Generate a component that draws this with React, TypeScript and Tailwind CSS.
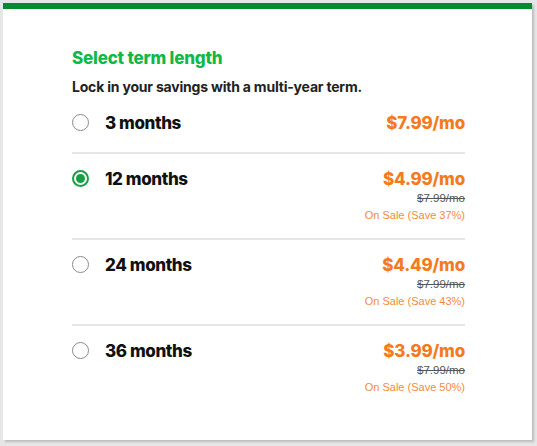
import React from "react";

type Term = {
  label: string;
  price: string;
  original?: string;
  sale?: string;
  selected?: boolean;
};

const terms: Term[] = [
  { label: "3 months", price: "$7.99/mo" },
  { label: "12 months", price: "$4.99/mo", original: "$7.99/mo", sale: "On Sale (Save 37%)", selected: true },
  { label: "24 months", price: "$4.49/mo", original: "$7.99/mo", sale: "On Sale (Save 43%)" },
  { label: "36 months", price: "$3.99/mo", original: "$7.99/mo", sale: "On Sale (Save 50%)" },
];

function Radio({ selected }: { selected?: boolean }) {
  if (selected) {
    return (
      <div className="mt-[3px] flex h-[17px] w-[17px] shrink-0 items-center justify-center rounded-full border-2 border-[#16a046] bg-white">
        <div className="h-[9px] w-[9px] rounded-full bg-[#16a046]" />
      </div>
    );
  }
  return <div className="mt-[3px] h-[17px] w-[17px] shrink-0 rounded-full border-[1.5px] border-[#8a8a8a] bg-white" />;
}

export default function App() {
  return (
    <div className="h-[446px] w-[537px] bg-[#e6e6e6] pl-[3px] pt-[3px]" style={{ fontFamily: "Inter, 'Noto Sans', sans-serif" }}>
      <div className="h-[437px] w-[529px] bg-white shadow-[2px_2px_2px_rgba(0,0,0,0.18)]">
        <div className="h-[6px] bg-[#07892f]" />
        <div className="pl-[69px] pr-[67px] pt-[39px]">
          <h2 className="text-[17px] font-extrabold leading-[20px] tracking-[-0.2px] text-[#12b847]">Select term length</h2>
          <p className="mt-[9px] text-[14px] font-bold leading-[20px] tracking-[-0.2px] text-[#222222]">
            Lock in your savings with a multi-year term.
          </p>
          <div className="mt-[14px]">
            {terms.map((t, i) => (
              <div
                key={t.label}
                className={`flex items-start justify-between ${i === 0 ? "pb-[17px]" : "pt-[13px] pb-[15px]"} ${i < terms.length - 1 ? "border-b-2 border-[#e6e6e6]" : ""}`}
              >
                <div className="flex items-start gap-[16px]">
                  <Radio selected={t.selected} />
                  <span className="text-[17px] font-extrabold leading-[24px] tracking-[-0.4px] text-[#111111]">{t.label}</span>
                </div>
                <div className="flex flex-col items-end">
                  <span className="text-[17px] font-extrabold leading-[24px] tracking-[-0.2px] text-[#f47a20]">{t.price}</span>
                  {t.original && (
                    <span
                      className="text-[11.5px] leading-[15px] text-[#555555] line-through"
                      style={{ fontFamily: "'Liberation Sans', Arial, sans-serif" }}
                    >
                      {t.original}
                    </span>
                  )}
                  {t.sale && (
                    <span
                      className="mt-[1px] text-[11px] leading-[16px] text-[#f58a3c]"
                      style={{ fontFamily: "'Liberation Sans', Arial, sans-serif" }}
                    >
                      {t.sale}
                    </span>
                  )}
                </div>
              </div>
            ))}
          </div>
        </div>
      </div>
    </div>
  );
}
